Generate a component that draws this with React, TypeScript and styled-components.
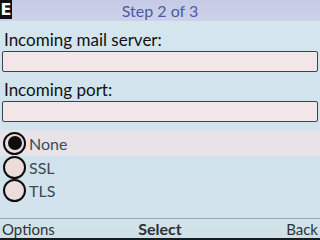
import styled, { createGlobalStyle } from 'styled-components';

const Global = createGlobalStyle`
    html, body {
        margin: 0;
        padding: 0;
        width: 320px;
        height: 240px;
        overflow: hidden;
    }
    body {
        font-family: Lato, "Open Sans", sans-serif;
    }
`

const Screen = styled.div`
    width: 320px;
    height: 240px;
    display: flex;
    flex-direction: column;
    background: linear-gradient(180deg, #d6e6ef 0%, #d0e2ec 60%, #d2e3ec 100%);
    color: #111;
`

const Header = styled.div`
    height: 21px;
    display: flex;
    align-items: center;
    background: linear-gradient(180deg, #c6cae6 0%, #cdd2ea 100%);
`

const Badge = styled.div`
    width: 12px;
    height: 19px;
    align-self: flex-start;
    background: #111;
    color: #fff;
    font: bold 16px "DejaVu Sans", sans-serif;
    display: flex;
    align-items: center;
    justify-content: center;
`

const Title = styled.div`
    flex: 1;
    text-align: center;
    font-size: 16px;
    line-height: 21px;
    color: #4a5aa6;
    padding-right: 12px;
`

const Body = styled.div`
    flex: 1;
    display: flex;
    flex-direction: column;
    padding: 8px 2px 0 2px;
`

const Label = styled.div`
    font-size: 17px;
    padding-left: 2px;
    height: 22px;
    line-height: 22px;
`

const Field = styled.div<{ $gap: number }>`
    height: 19px;
    border: 1.5px solid #37454c;
    border-radius: 2px;
    background: #f2e6e8;
    margin-bottom: ${p => p.$gap}px;
`

const Options = styled.div`
    display: flex;
    flex-direction: column;
    margin-left: -2px;
    margin-right: -2px;
`

const OptionRow = styled.div<{ $active?: boolean }>`
    height: ${p => (p.$active ? 26 : 23)}px;
    display: flex;
    align-items: center;
    gap: 3px;
    padding-left: 3px;
    background: ${p => (p.$active ? '#e7e3e9' : 'transparent')};
    font-size: 16px;
    color: #3e4a52;
`

const Radio = styled.span<{ $checked?: boolean }>`
    box-sizing: border-box;
    width: 23px;
    height: 23px;
    border: 2.5px solid #0d0d0d;
    border-radius: 50%;
    background: #ecdcdc;
    display: flex;
    align-items: center;
    justify-content: center;

    &::after {
        content: '';
        display: ${p => (p.$checked ? 'block' : 'none')};
        width: 14px;
        height: 14px;
        border-radius: 50%;
        background: #0d0d0d;
    }
`

const Footer = styled.div`
    height: 19px;
    border-top: 1px solid #9aa5ab;
    display: flex;
    align-items: center;
    justify-content: space-between;
    padding: 0 2px;
    font-size: 15px;
    color: #2a3338;
    background: linear-gradient(180deg, #d4e3ea 0%, #cfdfe7 100%);
    border-bottom: 2px solid #1a1a1a;
`

const SoftKey = styled.span<{ $bold?: boolean }>`
    font-weight: ${p => (p.$bold ? 'bold' : 'normal')};
    font-size: ${p => (p.$bold ? 16 : 15)}px;
    flex: 1;
    text-align: center;

    &:first-child { text-align: left; }
    &:last-child { text-align: right; }
`

export default function App() {
    const options = ["None", "SSL", "TLS"];

    return (
        <Screen>
            <Global />
            <Header>
                <Badge>E</Badge>
                <Title>Step 2 of 3</Title>
            </Header>
            <Body>
                <Label>Incoming mail server:</Label>
                <Field $gap={7} />
                <Label>Incoming port:</Label>
                <Field $gap={8} />
                <Options>
                    {options.map((o, i) => (
                        <OptionRow key={o} $active={i === 0}>
                            <Radio $checked={i === 0} />
                            {o}
                        </OptionRow>
                    ))}
                </Options>
            </Body>
            <Footer>
                <SoftKey>Options</SoftKey>
                <SoftKey $bold>Select</SoftKey>
                <SoftKey>Back</SoftKey>
            </Footer>
        </Screen>
    );
}
